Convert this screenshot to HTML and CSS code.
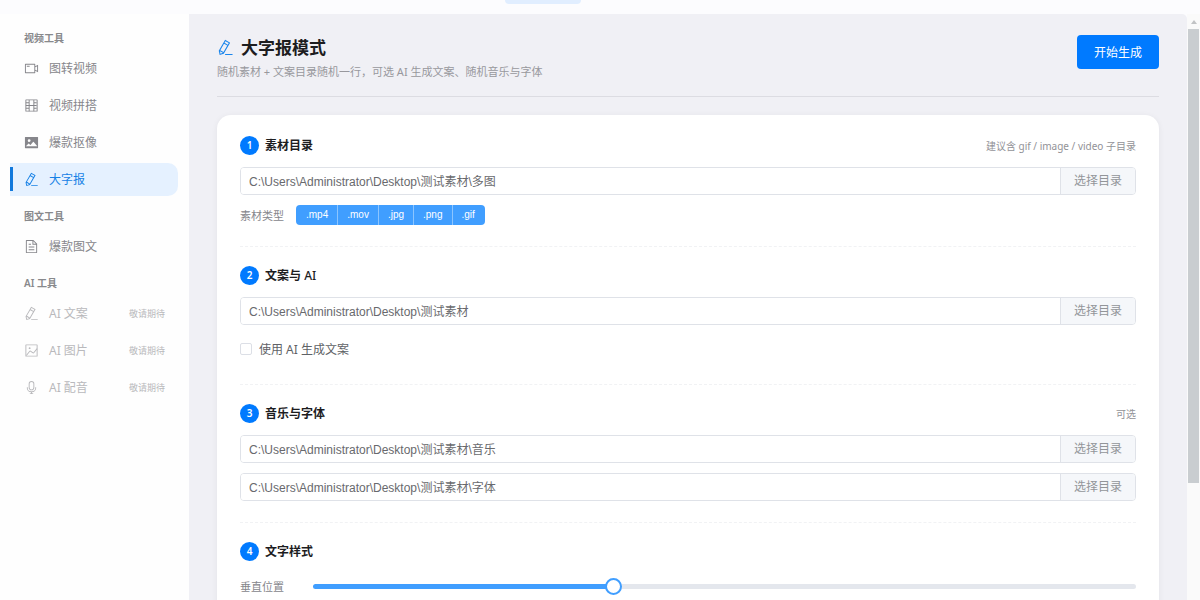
FILE: index.html
```
<!DOCTYPE html>
<html lang="zh-CN">
<head>
    <meta charset="UTF-8">
    <meta name="viewport" content="width=device-width, initial-scale=1.0">
    <title>大字报模式</title>
    <link rel="stylesheet" href="styles.css">
</head>
<body>

    <!-- Icon set -->
    <svg class="icon-set" aria-hidden="true">
        <symbol id="icon-video" viewBox="0 0 1024 1024"><path d="M704 768V256H128v512h576zm64-416 192-96v512l-192-96v128a32 32 0 0 1-32 32H96a32 32 0 0 1-32-32V224a32 32 0 0 1 32-32h640a32 32 0 0 1 32 32v128zm0 71.552v176.896l128 64V359.552l-128 64zM192 320h192v64H192v-64z"/></symbol>
        <symbol id="icon-film" viewBox="0 0 1024 1024"><path d="M160 160v704h704V160H160zm-32-64h768a32 32 0 0 1 32 32v768a32 32 0 0 1-32 32H128a32 32 0 0 1-32-32V128a32 32 0 0 1 32-32z"/><path d="M320 288V128h64v352h256V128h64v160h160v64H704v128h160v64H704v128h160v64H704v160h-64V544H384v352h-64V736H128v-64h192V544H128v-64h192V352H128v-64h192z"/></symbol>
        <symbol id="icon-picture-filled" viewBox="0 0 1024 1024"><path d="M96 896a32 32 0 0 1-32-32V160a32 32 0 0 1 32-32h832a32 32 0 0 1 32 32v704a32 32 0 0 1-32 32H96zm315.52-228.48-68.928-68.928a32 32 0 0 0-45.248 0L128 768.064h778.688l-242.112-290.56a32 32 0 0 0-49.216 0L458.752 665.408a32 32 0 0 1-47.232 2.112zM256 384a96 96 0 1 0 192.064-.064A96 96 0 0 0 256 384z"/></symbol>
        <symbol id="icon-pen" viewBox="0 0 1024 1024"><path d="m199.04 672.64 193.984 112 224-387.968-193.92-112-224 388.032zm-23.872 60.16 32.896 148.288 144.896-45.696L175.168 732.8zM455.04 229.248l193.92 112 56.704-98.112-193.984-112-56.64 98.112zM104.32 708.8l384-665.024 304.768 175.936L409.152 884.8h.064l-248.448 78.336L104.32 708.8zm384 254.272v-64h448v64h-448z"/></symbol>
        <symbol id="icon-document" viewBox="0 0 1024 1024"><path d="M832 384H576V128H192v768h640V384zm-26.496-64L640 154.496V320h165.504zM160 64h480l256 256v608a32 32 0 0 1-32 32H160a32 32 0 0 1-32-32V96a32 32 0 0 1 32-32zm160 448h384v64H320v-64zm0-192h160v64H320v-64zm0 384h384v64H320v-64z"/></symbol>
        <symbol id="icon-picture" viewBox="0 0 1024 1024"><path d="M160 160v704h704V160H160zm-32-64h768a32 32 0 0 1 32 32v768a32 32 0 0 1-32 32H128a32 32 0 0 1-32-32V128a32 32 0 0 1 32-32z"/><path d="M384 288q64 0 64 64t-64 64q-64 0-64-64t64-64zM185.408 876.992l-50.816-38.912L350.72 556.032a96 96 0 0 1 134.592-17.856l1.856 1.472 122.88 99.136a32 32 0 0 0 44.992-4.864l216-269.888 49.92 39.936-215.808 269.824-.256.32a96 96 0 0 1-135.04 14.464l-122.88-99.072-.64-.512a32 32 0 0 0-44.8 5.952L185.408 876.992z"/></symbol>
        <symbol id="icon-mic" viewBox="0 0 1024 1024"><path d="M512 128a128 128 0 0 0-128 128v256a128 128 0 1 0 256 0V256a128 128 0 0 0-128-128zm0-64a192 192 0 0 1 192 192v256a192 192 0 1 1-384 0V256A192 192 0 0 1 512 64zm-32 832v-64a288 288 0 0 1-288-288v-32a32 32 0 0 1 64 0v32a224 224 0 0 0 224 224h64a224 224 0 0 0 224-224v-32a32 32 0 1 1 64 0v32a288 288 0 0 1-288 288v64h64a32 32 0 1 1 0 64H416a32 32 0 1 1 0-64h64z"/></symbol>
    </svg>

    <header class="topbar">
        <div class="topbar-tab"></div>
    </header>

    <div class="container">
        <!-- Sidebar -->
        <nav class="sidebar">
            <h3>视频工具</h3>
            <a href="#image-video"><svg class="icon"><use href="#icon-video"/></svg>图转视频</a>
            <a href="#video-mix"><svg class="icon"><use href="#icon-film"/></svg>视频拼搭</a>
            <a href="#cutout"><svg class="icon"><use href="#icon-picture-filled"/></svg>爆款抠像</a>
            <a href="#poster" class="active"><svg class="icon"><use href="#icon-pen"/></svg>大字报</a>

            <h3>图文工具</h3>
            <a href="#article"><svg class="icon"><use href="#icon-document"/></svg>爆款图文</a>

            <h3>AI 工具</h3>
            <a href="#ai-text" class="disabled"><svg class="icon"><use href="#icon-pen"/></svg>AI 文案<span class="soon">敬请期待</span></a>
            <a href="#ai-image" class="disabled"><svg class="icon"><use href="#icon-picture"/></svg>AI 图片<span class="soon">敬请期待</span></a>
            <a href="#ai-voice" class="disabled"><svg class="icon"><use href="#icon-mic"/></svg>AI 配音<span class="soon">敬请期待</span></a>
        </nav>

        <!-- Main Content -->
        <main class="main">
            <div class="page-header">
                <div>
                    <h1><svg class="icon"><use href="#icon-pen"/></svg>大字报模式</h1>
                    <p>随机素材 + 文案目录随机一行，可选 AI 生成文案、随机音乐与字体</p>
                </div>
                <button type="button" class="btn-primary">开始生成</button>
            </div>

            <form class="card">
                <section>
                    <div class="section-head">
                        <span class="step">1</span>
                        <h2>素材目录</h2>
                        <span class="hint">建议含 gif / image / video 子目录</span>
                    </div>
                    <div class="path-row">
                        <input type="text" aria-label="素材目录" value="C:\Users\Administrator\Desktop\测试素材\多图">
                        <button type="button">选择目录</button>
                    </div>
                    <div class="type-row">
                        <span class="label">素材类型</span>
                        <div class="types">
                            <label><input type="checkbox" checked>.mp4</label>
                            <label><input type="checkbox" checked>.mov</label>
                            <label><input type="checkbox" checked>.jpg</label>
                            <label><input type="checkbox" checked>.png</label>
                            <label><input type="checkbox" checked>.gif</label>
                        </div>
                    </div>
                </section>

                <section>
                    <div class="section-head">
                        <span class="step">2</span>
                        <h2>文案与 <span class="latin">AI</span></h2>
                    </div>
                    <div class="path-row">
                        <input type="text" aria-label="文案目录" value="C:\Users\Administrator\Desktop\测试素材">
                        <button type="button">选择目录</button>
                    </div>
                    <div class="check-row">
                        <input type="checkbox" id="useAi">
                        <label for="useAi">使用 AI 生成文案</label>
                    </div>
                </section>

                <section>
                    <div class="section-head">
                        <span class="step">3</span>
                        <h2>音乐与字体</h2>
                        <span class="hint">可选</span>
                    </div>
                    <div class="path-row">
                        <input type="text" aria-label="音乐目录" value="C:\Users\Administrator\Desktop\测试素材\音乐">
                        <button type="button">选择目录</button>
                    </div>
                    <div class="path-row">
                        <input type="text" aria-label="字体目录" value="C:\Users\Administrator\Desktop\测试素材\字体">
                        <button type="button">选择目录</button>
                    </div>
                </section>

                <section>
                    <div class="section-head">
                        <span class="step">4</span>
                        <h2>文字样式</h2>
                    </div>
                    <div class="slider-row">
                        <label class="label" for="position">垂直位置</label>
                        <input type="range" id="position" min="0" max="100" step="0.1" value="36.2">
                    </div>
                </section>
            </form>
        </main>

        <!-- Scrollbar -->
        <div class="scrollbar">
            <div class="scroll-arrow"></div>
            <div class="scroll-thumb"></div>
            <div class="scroll-rest"></div>
        </div>
    </div>

</body>
</html>
```
FILE: styles.css
```
* {
    margin: 0;
    padding: 0;
    box-sizing: border-box;
}

body {
    font-family: "Noto Sans", "Noto Sans CJK SC", sans-serif;
    font-size: 12px;
    color: #606266;
    background-color: #fcfcfe;
    display: flex;
    flex-direction: column;
    height: 100vh;
    overflow: hidden;
}

button, input {
    font-family: inherit;
    font-size: 12px;
}

.icon-set {
    display: none;
}

.icon {
    width: 15px;
    height: 15px;
    fill: currentColor;
    flex-shrink: 0;
}

.topbar {
    display: flex;
    justify-content: center;
    height: 14px;
    padding-right: 114px;
    flex-shrink: 0;
}

.topbar-tab {
    width: 76px;
    height: 4px;
    background-color: #e1eeff;
    border-radius: 0 0 8px 8px;
}

.container {
    display: flex;
    flex: 1;
    min-height: 0;
}

/* Sidebar styling */
.sidebar {
    width: 189px;
    padding: 4px 11px 0 10px;
    background-color: #fefefe;
    flex-shrink: 0;
}

.sidebar h3 {
    margin: 13px 0 7px 14px;
    font-size: 10px;
    line-height: 14px;
    font-weight: 600;
    color: #88898c;
}

.sidebar a {
    position: relative;
    display: flex;
    align-items: center;
    gap: 10px;
    height: 33px;
    margin-bottom: 4px;
    padding: 0 13px 1px 14px;
    border-radius: 0 10px 10px 0;
    color: #86868b;
    text-decoration: none;
}

.sidebar a:has(+ h3) {
    margin-bottom: 0;
}

.sidebar a.active {
    background-color: #e5f1ff;
    color: #1681e6;
}

.sidebar a.active::before {
    content: "";
    position: absolute;
    left: 0;
    top: 4px;
    width: 3px;
    height: 24px;
    background-color: #1279dc;
}

.sidebar a.disabled {
    color: #b9b9bc;
}

.soon {
    margin-left: auto;
    font-size: 9px;
}

/* Main Content */
.main {
    flex: 1;
    min-width: 0;
    padding: 21px 28px 0;
    background-color: #f0f0f5;
    border-top-right-radius: 5px;
    overflow: hidden;
}

.page-header {
    display: flex;
    justify-content: space-between;
    align-items: flex-start;
    padding-bottom: 16px;
    margin-bottom: 18px;
    border-bottom: 1px solid #dcdce2;
}

.page-header h1 {
    display: flex;
    align-items: center;
    gap: 7px;
    font-size: 17px;
    line-height: 25px;
    font-weight: 600;
    color: #1d1d1f;
}

.page-header h1 .icon {
    width: 17px;
    height: 17px;
    color: #1b86ec;
}

.page-header p {
    margin-top: 4px;
    font-size: 11px;
    line-height: 16px;
    color: #98989d;
}

.btn-primary {
    width: 82px;
    height: 34px;
    padding-bottom: 1px;
    border: none;
    border-radius: 4px;
    background-color: #007aff;
    color: white;
    cursor: pointer;
}

.card {
    padding: 2px 23px;
    background-color: white;
    border-radius: 14px;
    box-shadow: 0 1px 6px rgba(0, 0, 0, 0.06);
}

.card section {
    display: flex;
    flex-direction: column;
    gap: 10px;
    padding: 19px 0 21px;
    border-bottom: 1px dashed #f1f2f4;
}

.card section:last-child {
    border-bottom: none;
}

.section-head {
    display: flex;
    align-items: center;
    gap: 6px;
    height: 19px;
    margin-bottom: 2px;
}

.section-head h2 {
    font-size: 12px;
    line-height: 18px;
    font-weight: 600;
    color: #1d1d1f;
}

.latin {
    font-weight: 500;
}

.step {
    width: 19px;
    height: 19px;
    border-radius: 50%;
    background-color: #007aff;
    color: white;
    font-size: 10px;
    line-height: 19px;
    font-weight: 600;
    text-align: center;
}

.hint {
    margin-left: auto;
    font-size: 10px;
    color: #929297;
}

.label {
    font-size: 11px;
    color: #86868b;
}

/* Directory inputs */
.path-row {
    display: flex;
    height: 28px;
    border: 1px solid #dfe2e8;
    border-radius: 4px;
    overflow: hidden;
}

.path-row input {
    flex: 1;
    min-width: 0;
    padding: 0 8px 2px;
    border: none;
    outline: none;
    font-family: "Liberation Sans", "Noto Sans CJK SC", sans-serif;
    color: #68696d;
}

.path-row button {
    width: 75px;
    padding-bottom: 2px;
    border: none;
    border-left: 1px solid #dfe2e8;
    background-color: #f5f7fa;
    color: #929599;
    cursor: pointer;
}

.type-row {
    display: flex;
    align-items: center;
    gap: 12px;
    height: 20px;
}

.types {
    display: flex;
    border-radius: 4px;
    overflow: hidden;
}

.types label {
    padding: 0 9px;
    border-right: 1px solid #8cc5ff;
    background-color: #409eff;
    color: white;
    font-family: "Liberation Sans", sans-serif;
    font-size: 10px;
    line-height: 20px;
    cursor: pointer;
}

.types label:first-child {
    padding-left: 10px;
}

.types label:last-child {
    padding-right: 10px;
    border-right: none;
}

.types input {
    display: none;
}

.check-row {
    display: flex;
    align-items: center;
    gap: 7px;
    height: 28px;
    padding-bottom: 1px;
}

.check-row input {
    appearance: none;
    width: 12px;
    height: 12px;
    border: 1px solid #dcdfe6;
    border-radius: 2px;
    background-color: white;
}

/* Slider */
.slider-row {
    display: flex;
    align-items: center;
    gap: 29px;
    height: 28px;
    padding-bottom: 2px;
}

.slider-row input {
    appearance: none;
    flex: 1;
    height: 17px;
    background: transparent;
}

.slider-row input::-webkit-slider-runnable-track {
    height: 5px;
    border-radius: 3px;
    background: linear-gradient(to right, #409eff 36.5%, #e4e7ed 36.5%);
}

.slider-row input::-webkit-slider-thumb {
    appearance: none;
    width: 17px;
    height: 17px;
    margin-top: -6px;
    border: 2px solid #409eff;
    border-radius: 50%;
    background-color: white;
}

/* Scrollbar */
.scrollbar {
    display: flex;
    flex-direction: column;
    width: 13px;
    padding: 0 1px;
    background-color: #fafafa;
    flex-shrink: 0;
}

.scroll-arrow {
    height: 15px;
    padding-top: 6px;
}

.scroll-arrow::before {
    content: "";
    display: block;
    width: 0;
    margin: 0 auto;
    border-left: 3px solid transparent;
    border-right: 3px solid transparent;
    border-bottom: 4px solid #c1c3c5;
}

.scroll-thumb {
    flex: 35;
    background-color: #c9cdd0;
}

.scroll-rest {
    flex: 9;
}
```
